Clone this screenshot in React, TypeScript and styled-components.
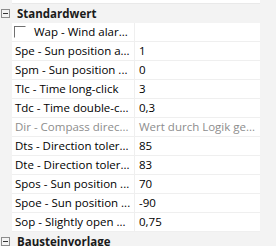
import React from "react";
import styled, { createGlobalStyle } from "styled-components";

const Global = createGlobalStyle`
  html, body { margin: 0; padding: 0; }
  body {
    background: #f3f3f3;
    font-family: "Open Sans", "Noto Sans", sans-serif;
    font-size: 11.5px;
    color: #000;
  }
`;

const Grid = styled.div`
  width: 276px;
  height: 246px;
  overflow: hidden;
  display: flex;
  flex-direction: column;
  background: #f3f3f3;
`;

const Stub = styled.div`
  margin-left: 12px;
  width: 248px;
  height: 3px;
  background: #fff;
  border-bottom: 1px solid #e9e9e9;
  flex: none;
`;

const Category = styled.div`
  height: 19px;
  display: flex;
  align-items: center;
  flex: none;
`;

const Toggle = styled.div`
  width: 7px;
  height: 7px;
  margin-left: 1px;
  border: 1px solid #8c8c8c;
  position: relative;
  flex: none;
  &::after {
    content: "";
    position: absolute;
    left: 1px;
    right: 1px;
    top: 3px;
    height: 1px;
    background: #333;
  }
`;

const CatLabel = styled.span`
  margin-left: 7px;
  font-weight: 700;
  color: #1a1a1a;
  white-space: nowrap;
`;

const Row = styled.div`
  margin-left: 12px;
  width: 248px;
  height: 18px;
  border-bottom: 1px solid #efefef;
  background: #fff;
  display: grid;
  grid-template-columns: 123px 1fr;
  flex: none;
`;

const NameCell = styled.div<{ $muted?: boolean }>`
  display: flex;
  align-items: center;
  padding-left: 3px;
  border-right: 1px solid #efefef;
  white-space: nowrap;
  overflow: hidden;
  color: ${(p) => (p.$muted ? "#8d8d8d" : "#000")};
  line-height: 18px;
`;

const ValueCell = styled.div<{ $muted?: boolean }>`
  display: flex;
  align-items: center;
  padding-left: 4px;
  white-space: nowrap;
  overflow: hidden;
  color: ${(p) => (p.$muted ? "#8d8d8d" : "#000")};
  line-height: 18px;
`;

const Check = styled.span`
  width: 12px;
  height: 12px;
  margin-left: -1px;
  margin-right: 8px;
  box-sizing: border-box;
  border-top: 1px solid #707070;
  border-left: 1px solid #707070;
  border-right: 1px solid #fff;
  border-bottom: 1px solid #fff;
  flex: none;
`;

type Item = { name: string; value: string; muted?: boolean; check?: boolean };

const items: Item[] = [
  { name: "Wap - Wind alar...", value: "", check: true },
  { name: "Spe - Sun position a...", value: "1" },
  { name: "Spm - Sun position ...", value: "0" },
  { name: "Tlc - Time long-click", value: "3" },
  { name: "Tdc - Time double-c...", value: "0,3" },
  { name: "Dir - Compass direc...", value: "Wert durch Logik ge...", muted: true },
  { name: "Dts - Direction toler...", value: "85" },
  { name: "Dte - Direction toler...", value: "83" },
  { name: "Spos - Sun position ...", value: "70" },
  { name: "Spoe - Sun position ...", value: "-90" },
  { name: "Sop - Slightly open ...", value: "0,75" },
];

export default function App() {
  return (
    <>
      <Global />
      <Grid>
        <Stub />
        <Category>
          <Toggle />
          <CatLabel>Standardwert</CatLabel>
        </Category>
        {items.map((it) => (
          <Row key={it.name}>
            <NameCell $muted={it.muted}>
              {it.check && <Check />}
              {it.name}
            </NameCell>
            <ValueCell $muted={it.muted}>{it.value}</ValueCell>
          </Row>
        ))}
        <Category>
          <Toggle />
          <CatLabel>Bausteinvorlage</CatLabel>
        </Category>
      </Grid>
    </>
  );
}
